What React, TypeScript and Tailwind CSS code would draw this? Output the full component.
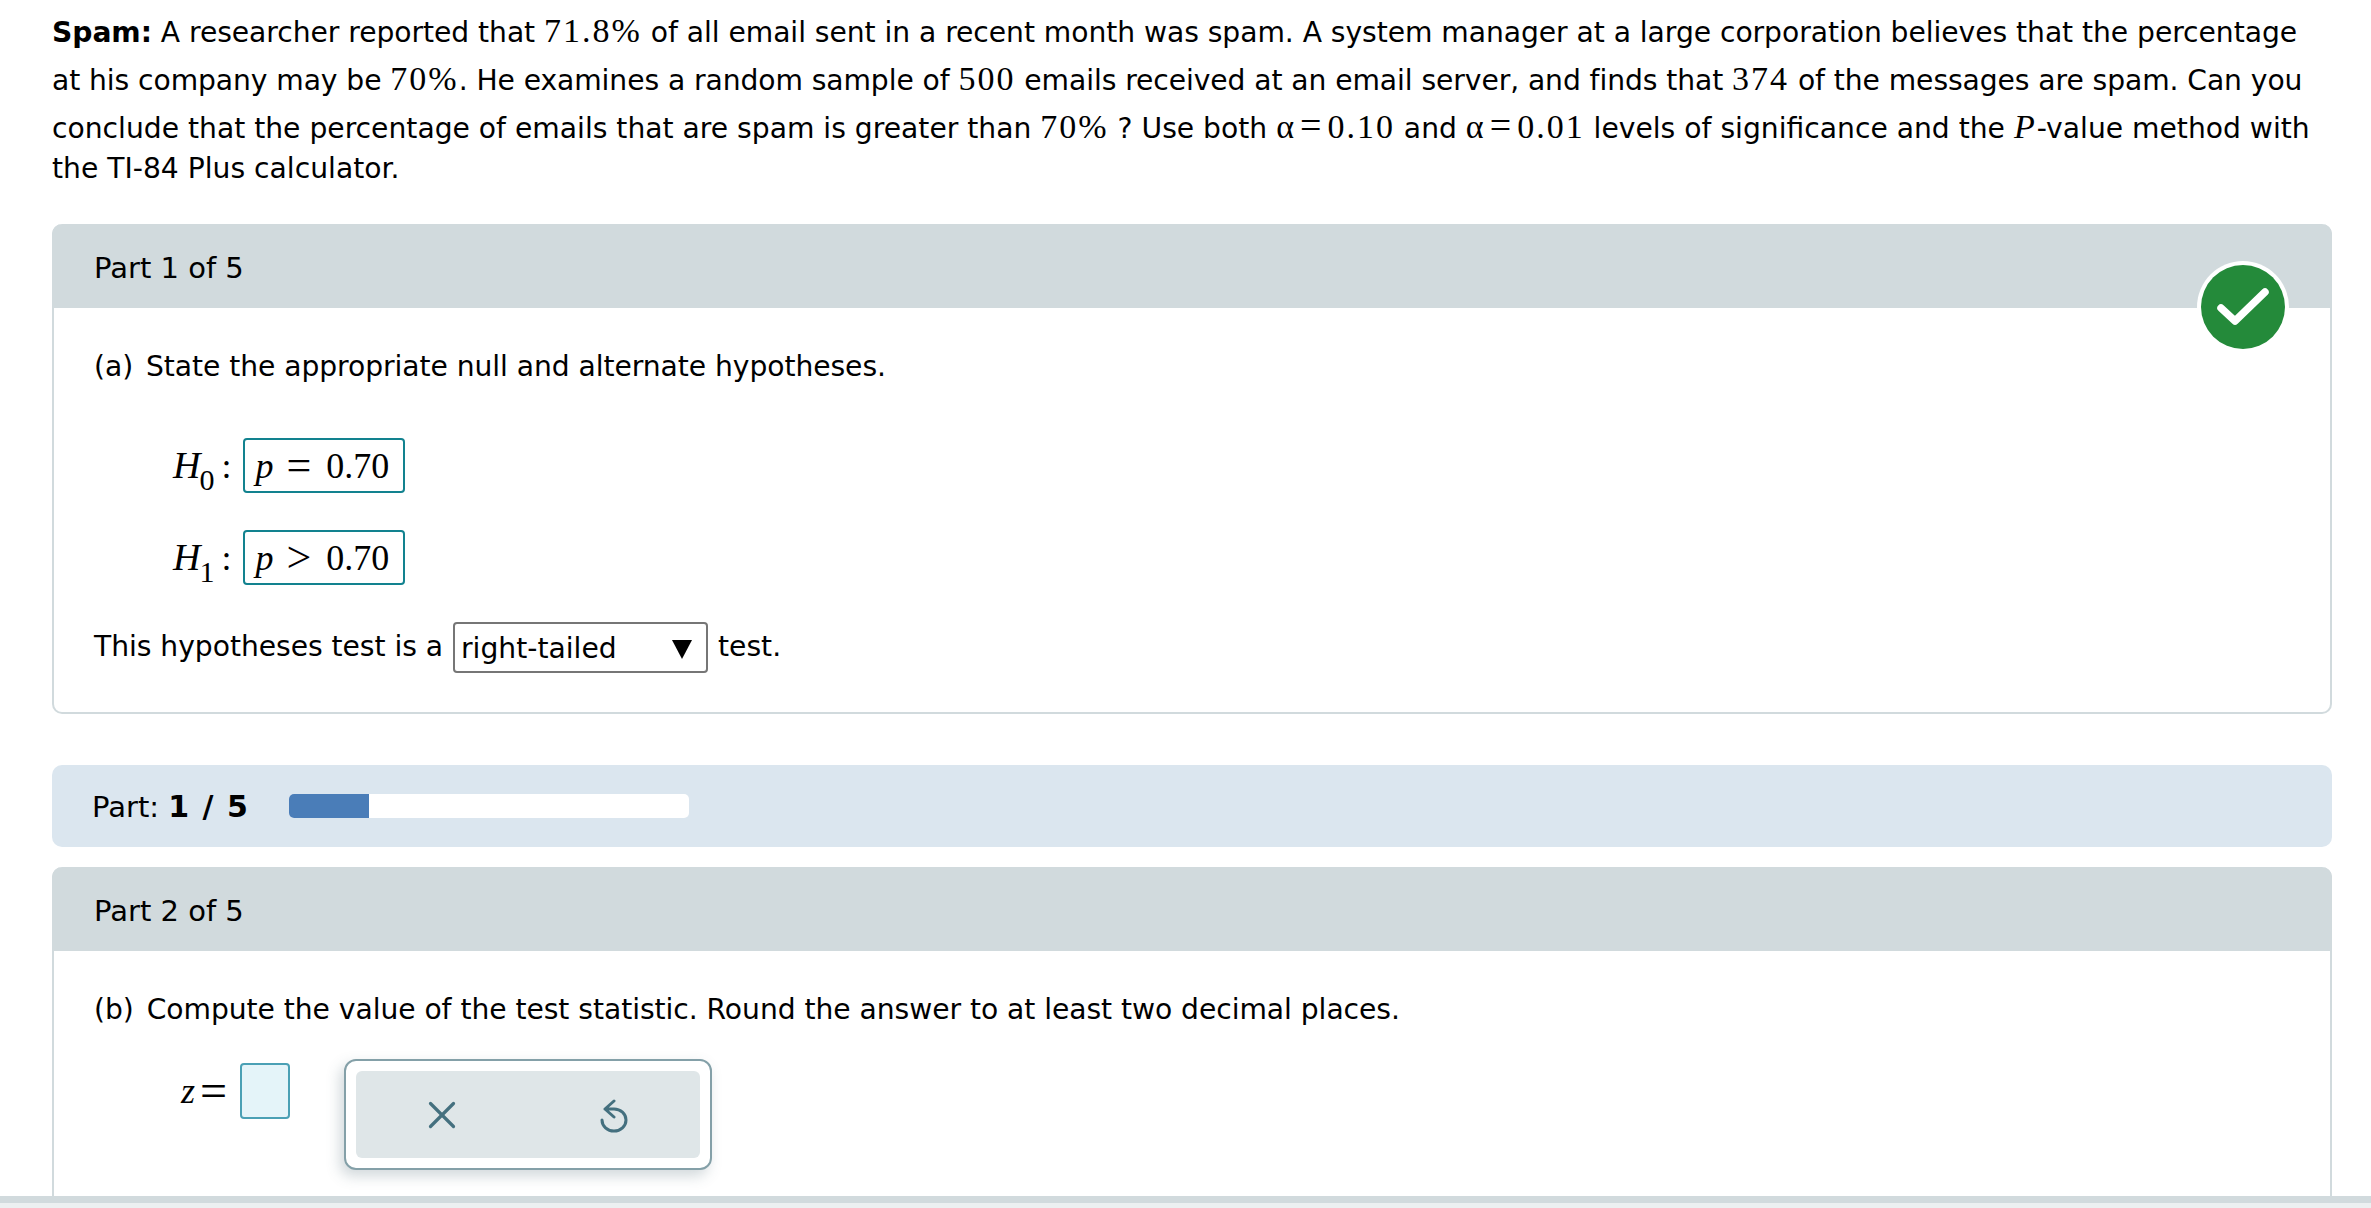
import { X } from "lucide-react";

const serif = "font-['Liberation_Serif',serif]";

const Num = ({ children }: { children: React.ReactNode }) => (
  <span className={`${serif} text-[34px] tracking-[2px]`}>{children}</span>
);

const Alpha = ({ value }: { value: string }) => (
  <span className={`${serif} text-[34px]`}>
    <span>α</span>
    <span className="mx-[6px] text-[38px] leading-none">=</span>
    <span className="tracking-[2px]">{value}</span>
  </span>
);

const Line = ({ h, children }: { h: string; children: React.ReactNode }) => (
  <div className={`flex items-center whitespace-pre ${h}`}>
    <span>{children}</span>
  </div>
);

const PartHeader = ({ label }: { label: string }) => (
  <div className="flex h-[84px] items-center rounded-t-[10px] bg-[#d1dadd] pl-[42px] pt-[5px] text-[29px]">
    {label}
  </div>
);

const AnswerRow = ({ sub, op }: { sub: string; op: string }) => (
  <div className="flex h-[55px] items-center pl-[79px]">
    <span className={`${serif} text-[38px] italic`}>H</span>
    <span className={`${serif} relative top-[14px] -ml-[1px] text-[30px]`}>{sub}</span>
    <span className={`${serif} ml-[7px] mr-[12px] text-[36px]`}>:</span>
    <div className={`${serif} flex h-[55px] w-[162px] items-center rounded-[4px] border-2 border-[#12828f] pl-[10px] text-[36px]`}>
      <span className="italic">p</span>
      <span className="ml-[13px] text-[44px] leading-none">{op}</span>
      <span className="ml-[15px]">0.70</span>
    </div>
  </div>
);

export default function App() {
  return (
    <div className="h-[1208px] w-[2371px] overflow-hidden bg-white font-['DejaVu_Sans',sans-serif] text-[28.2px] text-black">
      <div className="px-[52px] pt-[6px]">
        <Line h="h-[48px] tracking-[-0.05px]">
          <b>Spam:</b> A researcher reported that <Num>71.8%</Num> of all email sent in a recent month was spam. A system manager at a large corporation believes that the percentage
        </Line>
        <Line h="h-[48px] tracking-[-0.08px]">
          at his company may be <Num>70%</Num>. He examines a random sample of <Num>500</Num> emails received at an email server, and finds that <Num>374</Num> of the messages are spam. Can you
        </Line>
        <Line h="h-[48px]">
          conclude that the percentage of emails that are spam is greater than <Num>70%</Num> ? Use both <Alpha value="0.10" /> and <Alpha value="0.01" /> levels of significance and the <Num><i>P</i></Num>-value method with
        </Line>
        <Line h="h-[38px]">the TI-84 Plus calculator.</Line>
      </div>

      <div className="ml-[52px] mr-[39px] mt-[36px]">
        <div className="relative rounded-[10px] border-x-2 border-b-2 border-[#d1dadd]">
          <div className="-mx-[2px]">
            <PartHeader label="Part 1 of 5" />
          </div>
          <div className="absolute right-[45px] top-[41px] h-[84px] w-[84px] rounded-full bg-[#248a3a] ring-4 ring-white">
            <svg viewBox="0 0 84 84" className="h-[84px] w-[84px]" fill="none">
              <path d="M20 43 L34 56 L64 27" stroke="white" strokeWidth="7.5" strokeLinecap="round" strokeLinejoin="round" />
            </svg>
          </div>
          <div className="pb-[39px] pl-[40px] pt-[39px]">
            <p className="leading-[40px] tracking-[-0.06px]">
              <span className="mr-[4px]">(a)</span> State the appropriate null and alternate hypotheses.
            </p>
            <div className="mt-[51px] flex flex-col gap-[37px]">
              <AnswerRow sub="0" op="=" />
              <AnswerRow sub="1" op=">" />
            </div>
            <div className="mt-[37px] flex h-[51px] items-center">
              <span className="tracking-[-0.04px]">This hypotheses test is a</span>
              <div className="mx-[10px] flex h-[51px] w-[255px] items-center justify-between rounded-[4px] border-2 border-[#767676] pl-[6px] pr-[14px] pt-[3px]">
                <span>right-tailed</span>
                <svg viewBox="0 0 20 20" className="h-[20px] w-[20px]">
                  <path d="M0 1 H20 L10 20 Z" fill="black" />
                </svg>
              </div>
              <span>test.</span>
            </div>
          </div>
        </div>

        <div className="mt-[51px] flex h-[82px] items-center rounded-[10px] bg-[#dbe6ef] pl-[40px] text-[29px]">
          <span className="w-[197px] pt-[2px]">
            Part: <b className="text-[30px] tracking-[1.5px]">1 / 5</b>
          </span>
          <div className="h-[24px] w-[400px] overflow-hidden rounded-[5px] bg-white">
            <div className="h-full w-[80px] bg-[#4a7db8]" />
          </div>
        </div>

        <div className="mt-[20px] rounded-t-[10px] border-x-2 border-[#d1dadd] pb-[60px]">
          <div className="-mx-[2px]">
            <PartHeader label="Part 2 of 5" />
          </div>
          <div className="pl-[40px] pt-[39px]">
            <p className="leading-[40px] tracking-[-0.05px]">
              <span className="mr-[4px]">(b)</span> Compute the value of the test statistic. Round the answer to at least two decimal places.
            </p>
            <div className="mt-[29px] flex items-start pl-[87px]">
              <div className="mt-[4px] flex items-center">
                <span className={`${serif} text-[36px] italic`}>z</span>
                <span className={`${serif} ml-[5px] text-[48px] leading-none`}>=</span>
                <div className="ml-[13px] h-[56px] w-[50px] rounded-[4px] border-2 border-[#4aa0b5] bg-[#e4f4f9]" />
              </div>
              <div className="ml-[54px] flex h-[111px] w-[368px] rounded-[12px] border-2 border-[#84a0a8] bg-white p-[10px] shadow-[-4px_6px_14px_rgba(70,100,110,0.25)]">
                <div className="flex h-full w-full items-center rounded-[6px] bg-[#dfe6e8] text-[#44707f]">
                  <div className="flex flex-1 justify-center">
                    <X size={46} strokeWidth={1.7} />
                  </div>
                  <div className="flex flex-1 justify-center">
                    <svg viewBox="0 0 32 36" className="mt-[4px] h-[36px] w-[32px]" fill="none" stroke="currentColor" strokeWidth="3" strokeLinecap="round" strokeLinejoin="round">
                      <path d="M16 2 L7 10 L16 18 M7 10 H16 A12 11 0 1 1 4 21" />
                    </svg>
                  </div>
                </div>
              </div>
            </div>
          </div>
        </div>
      </div>
      <div className="fixed bottom-0 left-0 h-[12px] w-full border-t-[7px] border-[#d1dadd] bg-[#ecf0f1]" />
    </div>
  );
}
